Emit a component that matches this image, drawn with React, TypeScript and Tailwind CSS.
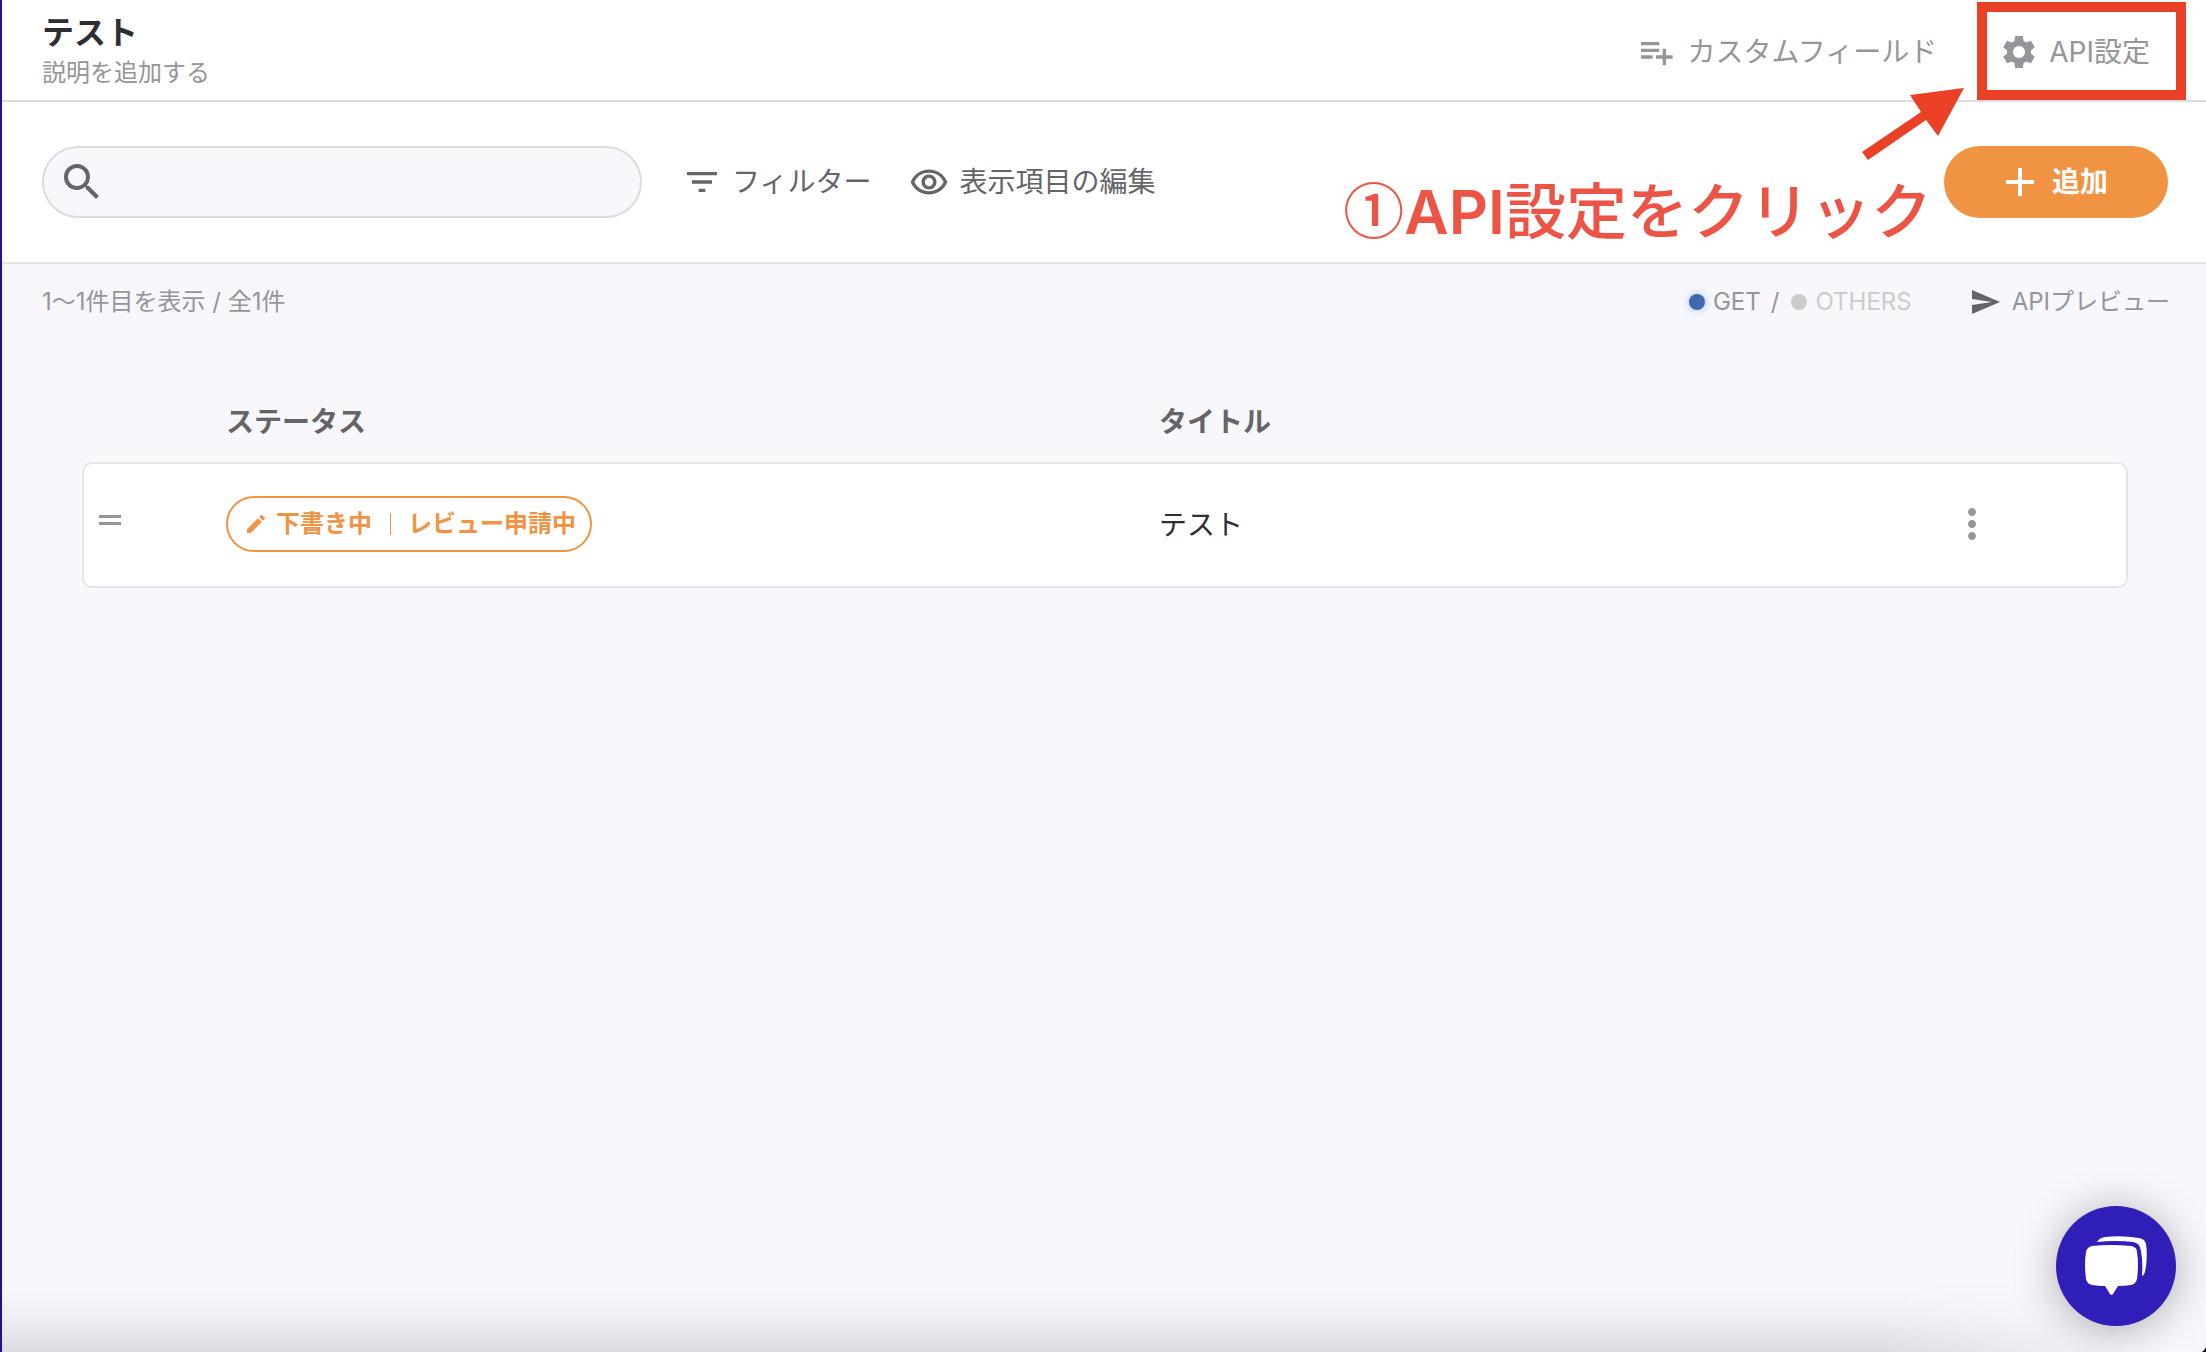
import { MdAdd, MdEdit, MdFilterList, MdMoreVert, MdOutlineRemoveRedEye, MdPlaylistAdd, MdSearch, MdSettings } from "react-icons/md";

function SendIcon() {
  return (
    <svg viewBox="0 0 28 24" className="h-6 w-7" fill="currentColor" aria-hidden="true">
      <path d="M0 0L28 12L0 24V15L20 12L0 9Z" />
    </svg>
  );
}

function ChatIcon() {
  return (
    <svg viewBox="0 0 62 60" className="h-[60px] w-[62px]" fill="#fff" aria-hidden="true">
      <path d="M7 10Q26 8 46 10Q52 11 52 16Q54 29 52 43Q51 48 46 49Q40 50 33 50L28 58Q26.500 60 25 58L20 50Q13 50 7 49Q2 48 1 43Q-1 29 1 16Q2 11 7 10Z" />
      <path d="M12 6Q14 2 20 1Q36 -1 54 2Q60 3 61 8Q63 22 60 36Q59 39 57 40Q58 26 56 15Q55 7 48 6Q30 4 12 6Z" />
    </svg>
  );
}

function Header() {
  return (
    <header className="flex h-[102px] items-center justify-between border-b-2 border-[#dcdcdc] bg-white pl-10">
      <div className="pt-1.5">
        <h1 className="text-[32px] leading-10 font-bold text-[#2d2d32]">テスト</h1>
        <p className="text-2xl leading-10 text-[#95959a]">説明を追加する</p>
      </div>
      <div className="flex items-center gap-10 pr-5 text-[28px] text-[#95959a]">
        <button type="button" className="mt-1 flex items-center gap-3">
          <MdPlaylistAdd className="size-10" />
          カスタムフィールド
        </button>
        <button type="button" className="mt-0.5 flex h-[98px] items-center gap-2.5 border-10 border-[#ea4025] pt-0.5 pr-[26px] pl-3">
          <MdSettings className="size-10" />
          API設定
        </button>
      </div>
    </header>
  );
}

function Toolbar() {
  return (
    <div className="relative flex h-[162px] items-center border-b-2 border-[#e6e6e6] bg-white pr-[38px] pl-10 text-[28px] text-[#646469]">
      <label className="flex h-[72px] w-[600px] items-center rounded-full border-2 border-[#dcdcdc] bg-[#f7f7fc] pl-[14px]">
        <MdSearch className="size-12" />
        <input type="search" aria-label="検索" className="h-full min-w-0 flex-1 rounded-full bg-transparent px-3 outline-none" />
      </label>
      <button type="button" className="ml-10 flex items-center gap-2.5">
        <MdFilterList className="size-10" />
        フィルター
      </button>
      <button type="button" className="ml-[38px] flex items-center gap-2.5">
        <MdOutlineRemoveRedEye className="size-10" />
        表示項目の編集
      </button>
      <button type="button" className="ml-auto flex h-[72px] w-56 items-center justify-center gap-2 rounded-full bg-[#f09343] pr-2 font-bold text-white">
        <MdAdd className="size-12" />
        追加
      </button>
      <p className="absolute top-[62px] right-[274px] text-[61px] leading-[88px] font-medium whitespace-nowrap text-[#ec5445]">
        <span className="font-['Noto_Sans_CJK_JP',sans-serif]">①</span>
        <span className="font-semibold">API</span>設定をクリック
      </p>
      <svg viewBox="0 0 102 72" className="absolute -top-[14px] right-[242px] h-[72px] w-[102px]" fill="#ea4025" aria-hidden="true">
        <path d="M102 0L48 7L59 24L0 64L6 72L64 32L76 48Z" />
      </svg>
    </div>
  );
}

function Summary() {
  return (
    <div className="flex h-[76px] items-center justify-between pr-9 pl-10 text-2xl text-[#95959a]">
      <p>1〜1件目を表示 / 全1件</p>
      <div className="flex items-center">
        <span className="size-4 rounded-full bg-[#4068b0] shadow-[0_0_8px_#a9c0f0]" />
        <span className="ml-2">GET</span>
        <span className="mr-3 ml-2.5">/</span>
        <span className="size-4 rounded-full bg-[#cccccc]" />
        <span className="ml-2 text-[#cccccc]">OTHERS</span>
        <button type="button" className="ml-[60px] flex items-center gap-3">
          <span className="text-[#646469]"><SendIcon /></span>
          APIプレビュー
        </button>
      </div>
    </div>
  );
}

function StatusBadge() {
  return (
    <span className="inline-flex h-14 items-center rounded-full border-2 border-[#f09343] px-4 pr-3.5 text-2xl font-bold text-[#f09343]">
      <MdEdit className="size-6" />
      <span className="ml-2">下書き中</span>
      <span className="mr-[17px] ml-[18px] h-[22px] w-px bg-[#f09343]" />
      レビュー申請中
    </span>
  );
}

function ContentTable() {
  return (
    <div className="mt-[50px] pr-[78px] pl-20">
      <table className="w-full table-fixed border-separate border-spacing-0 text-left text-[28px]">
        <colgroup>
          <col className="w-36" />
          <col className="w-[933px]" />
          <col />
          <col className="w-[180px]" />
        </colgroup>
        <thead>
          <tr className="h-[72px] align-top text-[#646469]">
            <th aria-label="並べ替え" />
            <th className="leading-[64px]">ステータス</th>
            <th className="leading-[64px]">タイトル</th>
            <th aria-label="操作" />
          </tr>
        </thead>
        <tbody>
          <tr className="h-[126px] [&>td]:border-y-2 [&>td]:border-[#e6e6e6] [&>td]:bg-white">
            <td className="rounded-l-[10px] border-l-2 pl-[15px]">
              <button type="button" aria-label="並べ替え" className="mb-2.5 flex w-[22px] flex-col gap-1">
                <span className="h-[3px] bg-[#95959a]" />
                <span className="h-[3px] bg-[#95959a]" />
              </button>
            </td>
            <td><div className="flex pb-0.5"><StatusBadge /></div></td>
            <td className="text-[#2d2d32]">テスト</td>
            <td className="rounded-r-[10px] border-r-2 pb-0.5">
              <button type="button" aria-label="メニュー" className="block text-[#95959a]">
                <MdMoreVert className="size-12" />
              </button>
            </td>
          </tr>
        </tbody>
      </table>
    </div>
  );
}

export default function App() {
  return (
    <main className="relative min-h-screen overflow-hidden border-l-2 border-[#220f96] bg-[#f7f7fc] font-[Inter,'Noto_Sans_CJK_JP',sans-serif]">
      <Header />
      <Toolbar />
      <Summary />
      <ContentTable />
      <div className="pointer-events-none absolute inset-x-0 bottom-0 h-[72px] bg-linear-to-b from-transparent via-[#00000008] to-[#0000001c] [mask-image:linear-gradient(to_right,black_85%,transparent_97%)]" />
      <svg viewBox="0 0 4 5" className="absolute right-0 bottom-0 h-[5px] w-1" aria-hidden="true">
        <path d="M4 0V5H0Q3 3 4 0Z" />
      </svg>
      <button type="button" aria-label="チャットを開く" className="fixed right-[30px] bottom-[26px] flex size-[120px] items-center justify-center rounded-full bg-[#301eb8] shadow-[0_4px_44px_rgba(0,0,0,0.3)]">
        <ChatIcon />
      </button>
    </main>
  );
}
